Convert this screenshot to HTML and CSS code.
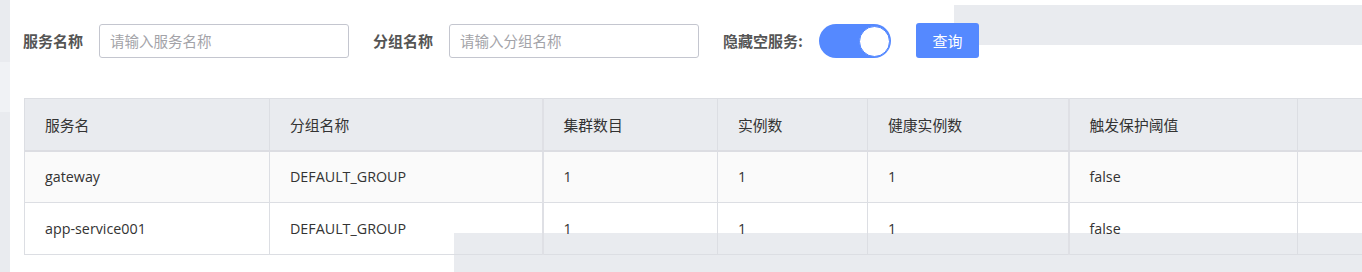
FILE: index.html
```html
<!DOCTYPE html>
<html lang="zh-CN">
<head>
<meta charset="utf-8">
<title>服务列表</title>
<link rel="stylesheet" href="styles.css">
</head>
<body>
<div class="page">
  <aside class="side">
    <div class="side-a"></div>
    <div class="side-b"></div>
    <div class="side-c"></div>
  </aside>
  <main class="main">
    <form class="filters">
      <label class="f-label">服务名称</label>
      <input class="f-input" type="text" placeholder="请输入服务名称">
      <label class="f-label gap">分组名称</label>
      <input class="f-input" type="text" placeholder="请输入分组名称">
      <label class="f-label gap">隐藏空服务:</label>
      <span class="switch"><span class="knob"></span></span>
      <button class="btn" type="button">查询</button>
    </form>
    <div class="table-wrap">
      <table class="grid">
        <colgroup>
          <col class="c1"><col class="c2"><col class="c3"><col class="c4"><col class="c5"><col class="c6"><col class="c7">
        </colgroup>
        <thead>
          <tr>
            <th>服务名</th>
            <th>分组名称</th>
            <th class="thick">集群数目</th>
            <th>实例数</th>
            <th>健康实例数</th>
            <th class="thick">触发保护阈值</th>
            <th></th>
          </tr>
        </thead>
        <tbody>
          <tr class="odd">
            <td>gateway</td>
            <td>DEFAULT_GROUP</td>
            <td class="thick">1</td>
            <td>1</td>
            <td>1</td>
            <td class="thick">false</td>
            <td></td>
          </tr>
          <tr class="even">
            <td>app-service001</td>
            <td>DEFAULT_GROUP</td>
            <td class="thick">1</td>
            <td>1</td>
            <td>1</td>
            <td class="thick">false</td>
            <td></td>
          </tr>
        </tbody>
      </table>
    </div>
  </main>
  <div class="ghost ghost-top"></div>
  <div class="ghost ghost-bottom"></div>
</div>
</body>
</html>
```
FILE: styles.css
```css
* { box-sizing: border-box; }
html, body {
  margin: 0;
  padding: 0;
  background: #ffffff;
  overflow: hidden;
}
body {
  font-family: "Open Sans", "Noto Sans CJK SC", sans-serif;
  font-size: 14px;
  color: #333;
  width: 1362px;
  height: 272px;
}
.page {
  position: relative;
  display: flex;
  width: 1362px;
  height: 272px;
}
.side {
  width: 10px;
  flex: none;
  display: flex;
  flex-direction: column;
}
.side-a { height: 62px; background: #e9ebef; }
.side-b { height: 50px; background: #f0f2f5; }
.side-c { flex: 1; background: #e9ebef; }

.main {
  flex: 1;
  min-width: 0;
  padding-left: 13px;
  position: relative;
  z-index: 1;
}
.filters {
  display: flex;
  align-items: center;
  height: 35px;
  margin: 23px 0 0 0;
}
.f-label {
  font-family: "Noto Sans CJK SC", sans-serif;
  font-weight: 700;
  font-size: 15px;
  color: #555;
  margin-right: 16px;
  white-space: nowrap;
}
.f-label.gap { margin-left: 24px; }
.f-input {
  width: 250px;
  height: 34px;
  border: 1px solid #c4c6cf;
  border-radius: 3px;
  padding: 0 10px;
  font-family: "Noto Sans CJK SC", sans-serif;
  font-size: 14.5px;
  color: #333;
  background: #fff;
  outline: none;
}
.f-input::placeholder { color: #a3a3a8; }
.switch {
  width: 72px;
  height: 34px;
  border-radius: 17px;
  background: #5589ff;
  position: relative;
  display: inline-block;
  flex: none;
}
.knob {
  position: absolute;
  right: 1px;
  top: 2px;
  width: 31px;
  height: 31px;
  border-radius: 50%;
  background: #fff;
  border: 1px solid #5589ff;
}
.btn {
  margin-left: 25px;
  width: 63px;
  height: 35px;
  border: none;
  border-radius: 3px;
  background: #5589ff;
  color: #fff;
  font-family: "Noto Sans CJK SC", sans-serif;
  font-size: 15px;
  padding: 0;
}
.table-wrap {
  margin-top: 40px;
  margin-left: 1px;
  width: 1400px;
}
.grid {
  border-collapse: collapse;
  table-layout: fixed;
  width: 1400px;
  border: 1px solid #dcdee3;
  border-right: none;
}
.c1 { width: 245px; }
.c2 { width: 273px; }
.c3 { width: 175px; }
.c4 { width: 150px; }
.c5 { width: 201px; }
.c6 { width: 229px; }
.c7 { width: 127px; }
.grid th,
.grid td {
  height: 52px;
  padding: 0 20px;
  text-align: left;
  font-weight: 400;
  font-size: 14.3px;
  border-left: 1px solid #dcdee3;
  border-bottom: 1px solid #dcdee3;
  white-space: nowrap;
}
.grid th {
  font-family: "Noto Sans CJK SC", sans-serif;
  font-size: 14.8px;
  background: #e9ebef;
  color: #333;
  border-bottom: 2px solid #dcdde2;
}
.grid .thick { border-left: 2px solid #dfe0e5; }
.odd td { background: #fafafa; }
.even td { background: transparent; }

.ghost {
  position: absolute;
  background: #e9ebef;
  z-index: 0;
}
.ghost-top {
  left: 954px;
  top: 5px;
  width: 408px;
  height: 40px;
}
.ghost-bottom {
  left: 454px;
  top: 233px;
  width: 908px;
  height: 39px;
}
```
